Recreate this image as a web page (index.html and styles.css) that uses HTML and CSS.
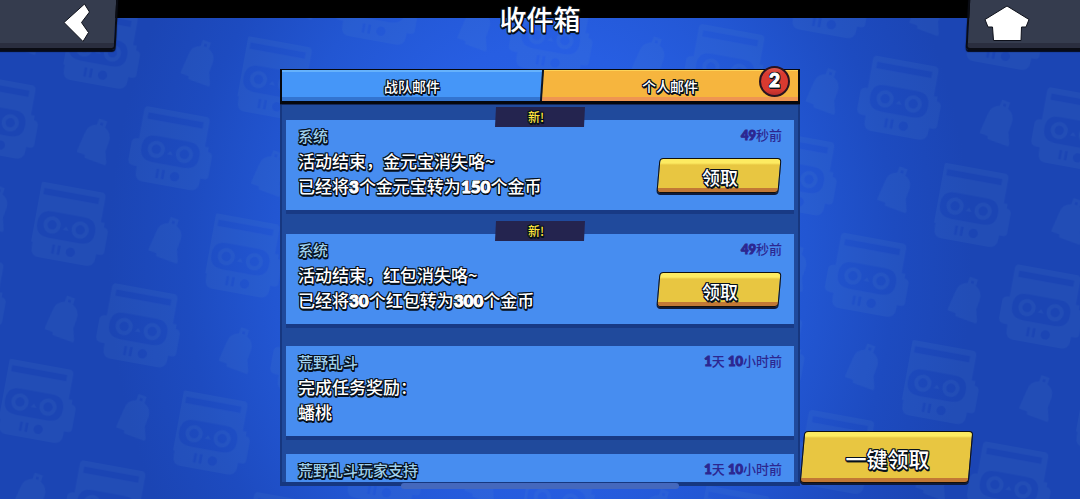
FILE: index.html
```html
<!DOCTYPE html>
<html lang="zh-CN">
<head>
<meta charset="utf-8">
<meta name="viewport" content="width=device-width, initial-scale=1">
<title>收件箱</title>
<link rel="stylesheet" href="styles.css">
</head>
<body>
<div class="app">
  <svg class="backdrop" aria-hidden="true">
    <defs>
      <g id="robot">
        <path fill-rule="evenodd" d="M-31-40H30Q35-40 35-35V-9H39V-4Q44-4 44 1V21Q44 25 40 25H36V29Q36 39 26 39H-23Q-32 39-32 29V24H-36Q-42 24-42 18V0Q-42-5-35-5V-35Q-35-40-31-40ZM-30-34V-27H29V-34ZM-17-11Q-31-11-31 3T-17 17H17Q31 17 31 3T17-11ZM-11 23V33H-8V23ZM-5 23V33H-2V23ZM4 28A5 5 0 1 0 14 28A5 5 0 1 0 4 28Z"/>
        <path fill-rule="evenodd" d="M-24 3A9 9 0 1 1-6 3A9 9 0 1 1-24 3ZM-20 3A5 5 0 1 0-10 3A5 5 0 1 0-20 3ZM6 3A9 9 0 1 1 24 3A9 9 0 1 1 6 3ZM10 3A5 5 0 1 0 20 3A5 5 0 1 0 10 3ZM-3 6L0 2L3 6Z"/>
      </g>
      <path id="bell" fill-rule="evenodd" d="M-4-23H5V-16Q14-13 14-3V7L19 18V21H-4L-5 18H-14V14L-13-2Q-13-13-4-16ZM-1-20V-17H2V-20Z"/>
      <pattern id="tile" width="177" height="180" patternUnits="userSpaceOnUse" patternTransform="translate(69 15) rotate(10.3)">
        <g transform="translate(121 96) scale(.95)"><use href="#robot"/></g>
        <g transform="translate(32 9) scale(.95)"><use href="#robot"/></g>
        <g transform="translate(32 189) scale(.95)"><use href="#robot"/></g>
        <g transform="translate(45 101) rotate(10) scale(.95)"><use href="#bell"/></g>
        <g transform="translate(133 5) rotate(10) scale(.95)"><use href="#bell"/></g>
        <g transform="translate(133 185) rotate(10) scale(.95)"><use href="#bell"/></g>
      </pattern>
    </defs>
    <rect width="100%" height="100%" fill="url(#tile)"/>
  </svg>

  <header class="topbar">
    <button class="corner corner-back" type="button" aria-label="返回">
      <svg width="26" height="40" viewBox="0 0 26 40"><path d="M20.500 4L25.500 12L17.500 22.500L24.500 32.500L19 41.500L0 22.500Z"/></svg>
    </button>
    <h1 class="title">收件箱</h1>
    <button class="corner corner-home" type="button" aria-label="主页">
      <svg width="46" height="42" viewBox="0 0 46 42"><path d="M23 6L45 19.500L42 27H37.500L37 40.500H9.500L8.500 27H4L1 19.500Z"/></svg>
    </button>
  </header>

  <main class="stage">
    <section class="panel">
      <div class="tabs" role="tablist">
        <button class="tab tab-team" type="button" role="tab" aria-selected="false">战队邮件</button>
        <button class="tab tab-own" type="button" role="tab" aria-selected="true">个人邮件<span class="badge">2</span></button>
      </div>
      <div class="list">
        <article class="mail is-new">
          <span class="tag">新!</span>
          <div class="text">
            <h2 class="sender">系统</h2>
            <p class="body">活动结束，金元宝消失咯~<br>已经将<b>3</b>个金元宝转为<b>150</b>个金币</p>
          </div>
          <div class="side">
            <time class="time"><b>49</b>秒前</time>
            <button class="gold claim" type="button">领取</button>
          </div>
        </article>
        <article class="mail is-new">
          <span class="tag">新!</span>
          <div class="text">
            <h2 class="sender">系统</h2>
            <p class="body">活动结束，红包消失咯~<br>已经将<b>30</b>个红包转为<b>300</b>个金币</p>
          </div>
          <div class="side">
            <time class="time"><b>49</b>秒前</time>
            <button class="gold claim" type="button">领取</button>
          </div>
        </article>
        <article class="mail">
          <div class="text">
            <h2 class="sender">荒野乱斗</h2>
            <p class="body">完成任务奖励：<br>蟠桃</p>
          </div>
          <div class="side">
            <time class="time"><b>1</b>天<b> 10</b>小时前</time>
          </div>
        </article>
        <article class="mail">
          <div class="text">
            <h2 class="sender">荒野乱斗玩家支持</h2>
          </div>
          <div class="side">
            <time class="time"><b>1</b>天<b> 10</b>小时前</time>
          </div>
        </article>
      </div>
    </section>
    <button class="gold claim-all" type="button">一键领取</button>
  </main>
  <div class="home-bar"></div>
</div>
</body>
</html>
```
FILE: styles.css
```css
* {
  box-sizing: border-box;
}

body {
  margin: 0;
  background: #000;
  font-family: "Noto Sans CJK SC", sans-serif;
  font-weight: 500;
  color: #fff;
}

h1, h2, p {
  margin: 0;
  font-weight: inherit;
}

button {
  padding: 0;
  border: 0;
  background: none;
  color: inherit;
  font: inherit;
  cursor: pointer;
}

b {
  font-family: Lato, sans-serif;
  font-weight: 900;
  -webkit-text-stroke: 1px currentColor;
}

.app {
  position: relative;
  display: flex;
  flex-direction: column;
  height: 100vh;
  overflow: hidden;
  isolation: isolate;
}

.backdrop {
  position: absolute;
  z-index: -1;
  top: 18px;
  left: 0;
  width: 100%;
  height: calc(100% - 18px);
  background: radial-gradient(ellipse 40% 110% at 50% 50%, #2a62ea 0%, #275ee2 40%, #2256d2 62%, #1d4bc0 82%, #1b45b4 100%);
  fill: rgb(90 150 200 / 11%);
}

/* Outlined game lettering */
.title, .tab, .sender, .body, .gold, .badge, .tag {
  text-shadow:
    -1px -1px 0 #06101c, 0 -1px 0 #06101c, 1px -1px 0 #06101c,
    -1px 0 0 #06101c, 1px 0 0 #06101c,
    -1px 1px 0 #06101c, 0 1px 0 #06101c, 1px 1px 0 #06101c,
    0 2px 0 #06101c, 1px 2px 0 #06101c;
}

.topbar {
  display: grid;
  grid-template-columns: 118px 1fr 118px;
  height: 50px;
}

.title {
  font-size: 27px;
  line-height: 38px;
  text-align: center;
}

.corner {
  position: relative;
  display: flex;
  isolation: isolate;
}

.corner::before {
  content: "";
  position: absolute;
  z-index: -1;
  inset: -4px 1px 0 -12px;
  border: 2px solid #0a0c14;
  border-radius: 4px;
  background: linear-gradient(to top, #2a2e3f 5px, #353c4e 5px);
  box-shadow: 0 2px 1px #060a1a;
  transform: skewX(-3deg);
}

.corner-home::before {
  inset: -4px -12px 0 5px;
}

.corner svg {
  overflow: visible;
  fill: #fff;
  stroke: #0d101a;
  stroke-width: 1;
}

.corner-back {
  justify-content: flex-end;
  padding-right: 28px;
}

.corner-home {
  padding-left: 22px;
}

.stage {
  flex: 1;
  display: grid;
  grid-template-columns: 1fr minmax(0, 520px) 1fr;
  grid-template-rows: minmax(0, 1fr);
  min-height: 0;
  padding: 19px 0 13px;
}

.panel {
  grid-column: 2;
  display: flex;
  flex-direction: column;
  border: solid #163780;
  border-width: 0 2px 4px;
  background: linear-gradient(#1c3e88, #204a9c 24px);
}

.tabs {
  display: flex;
  margin: 0 -2px;
  height: 35px;
  border: solid #05070d;
  border-width: 1px 2px 3px;
  box-shadow: 0 1px 0 #14285a;
  background: #4596f8;
}

.tab {
  position: relative;
  font-size: 14px;
  line-height: 28px;
}

.tab-team {
  flex: 130;
  background: linear-gradient(#66b2fc 2px, #4596f8 2px 27px, #3374d0 27px);
}

.tab-own {
  flex: 128;
  isolation: isolate;
  background: linear-gradient(#fdd45a 1px, #f6b53e 1px 27px, #ef9551 27px);
}

.tab-own::before {
  content: "";
  position: absolute;
  z-index: -1;
  inset: 0 auto 0 -1px;
  width: 6px;
  border-left: 2px solid #0b1424;
  background: linear-gradient(#fdd45a 1px, #f6b53e 1px 27px, #ef9551 27px);
  transform: skewX(-4deg);
}

.badge {
  position: absolute;
  top: -4px;
  right: 8px;
  width: 31px;
  height: 31px;
  border: 2px solid #2a1420;
  border-radius: 50%;
  background: linear-gradient(#dc5a50, #d93a30 20% 80%, #b82c2c);
  font-family: Lato, sans-serif;
  font-size: 19px;
  font-weight: 900;
  line-height: 24px;
  -webkit-text-stroke: 1px currentColor;
}

.list {
  flex: 1;
  display: flex;
  flex-direction: column;
  gap: 18px;
  min-height: 0;
  padding: 10px 4px 0;
  overflow: hidden auto;
  scrollbar-width: none;
}

.mail {
  position: relative;
  flex: none;
  display: flex;
  justify-content: space-between;
  min-height: 90px;
  padding: 0 12px;
  background: #478df0;
  box-shadow: 0 4px 0 #183a85;
}

.is-new {
  margin-top: 6px;
}

.is-new + .mail:not(.is-new) {
  margin-top: 4px;
}

.tag {
  position: absolute;
  top: -13px;
  left: 50%;
  width: 90px;
  margin-left: -45px;
  padding-right: 8px;
  background: #24244f;
  clip-path: polygon(1px 0, 100% 0, calc(100% - 1px) 100%, 0 100%);
  color: #ffe43c;
  font-size: 12px;
  line-height: 20px;
  text-align: center;
}

.text {
  padding-top: 7px;
}

.sender {
  margin-bottom: 3px;
  color: #9fd0ee;
  font-size: 15px;
  line-height: 18px;
}

.body {
  font-size: 17px;
  line-height: 25px;
}

.side {
  display: flex;
  flex-direction: column;
  align-items: flex-end;
  gap: 14px;
  padding-top: 6px;
}

.time {
  color: #2c2790;
  font-size: 13px;
  line-height: 18px;
}

.gold {
  position: relative;
  isolation: isolate;
}

.gold::before {
  content: "";
  position: absolute;
  z-index: -1;
  inset: 0 2px 2px;
  border: 1px solid #12100c;
  border-radius: 4px;
  background: linear-gradient(to top, #c27835 4px, transparent 4px), linear-gradient(#fdeb62 4px, #e8c641 6px);
  box-shadow: 0 2px 0 #101a38;
  transform: skewX(-5deg);
}

.claim {
  width: 126px;
  height: 37px;
  padding-left: 2px;
  font-size: 18px;
  line-height: 34px;
}

.claim-all {
  align-self: end;
  justify-self: start;
  width: 173px;
  height: 54px;
  margin-bottom: 1px;
  padding-left: 2px;
  font-size: 21px;
  line-height: 50px;
}

.home-bar {
  position: absolute;
  bottom: 10px;
  left: 50%;
  width: 278px;
  height: 6px;
  border-radius: 3px;
  background: #4468bd;
  transform: translateX(-50%);
}
```
